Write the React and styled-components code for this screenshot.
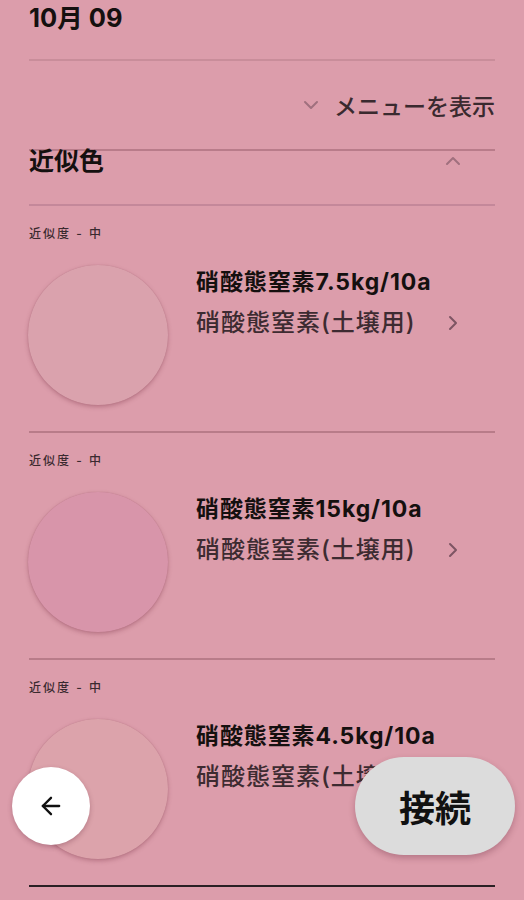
import React from "react";
import styled, { createGlobalStyle } from "styled-components";
import { ChevronDown, ChevronUp, ChevronRight, ArrowLeft } from "lucide-react";

const Global = createGlobalStyle`
  html, body { margin: 0; padding: 0; background: #dc9dab; }
  body { font-family: Inter, "Noto Sans CJK JP", "Noto Sans", sans-serif; }
  * { box-sizing: border-box; }
`;

const Page = styled.div`
  position: relative;
  width: 524px;
  height: 900px;
  overflow: hidden;
  background: #dc9dab;
  padding: 0 29px;
  color: #1c1316;
`;

const Header = styled.div`
  height: 61px;
  border-bottom: 2px solid #c98d9a;
`;

const DateText = styled.div`
  font-size: 25.5px;
  font-weight: 700;
  line-height: 35px;
  color: #15100f;
`;

const MenuRow = styled.div`
  height: 90px;
  display: flex;
  align-items: center;
  justify-content: flex-end;
  gap: 11px;
  border-bottom: 2px solid #b97c8a;
  color: #3a2a2f;
  font-size: 23px;
  font-weight: 500;
`;

const SectionHeader = styled.div`
  height: 55px;
  display: flex;
  justify-content: space-between;
  align-items: flex-start;
  border-bottom: 2px solid #c4889a;
`;

const SectionTitle = styled.div`
  font-size: 25px;
  font-weight: 700;
  line-height: 22px;
  margin-top: -1px;
  color: #15100f;
`;

const IconSlot = styled.div`
  display: flex;
  color: ${(p) => p.$color || "#9c6a78"};
  margin-right: ${(p) => p.$mr || 0}px;
  margin-top: ${(p) => p.$mt || 0}px;
`;

const Item = styled.div`
  padding: 20px 0 26px;
  border-bottom: 2px solid ${(p) => (p.$last ? "#2a2024" : "#b87c89")};
`;

const Label = styled.div`
  font-size: 12px;
  font-weight: 500;
  line-height: 16px;
  letter-spacing: 2px;
  color: #3a2a2f;
`;

const Row = styled.div`
  margin-top: 23px;
  display: flex;
  align-items: flex-start;
  gap: 28px;
`;

const Swatch = styled.div`
  width: 140px;
  height: 140px;
  border-radius: 50%;
  flex: none;
  margin-left: -1px;
  background: ${(p) => p.$color};
  box-shadow: 0 2px 4px rgba(120, 50, 70, 0.35), 0 0 1px rgba(120, 50, 70, 0.3);
`;

const Info = styled.div`
  flex: 1;
  margin-top: 3px;
  margin-right: 30px;
  display: flex;
  flex-direction: column;
  gap: 13px;
`;

const Title = styled.div`
  font-size: 23px;
  font-weight: 700;
  line-height: 28px;
  letter-spacing: 0.9px;
  color: #15100f;
  white-space: nowrap;
`;

const SubRow = styled.div`
  display: flex;
  align-items: center;
  justify-content: space-between;
`;

const Sub = styled.div`
  font-size: 24px;
  font-weight: 500;
  line-height: 28px;
  letter-spacing: 1px;
  color: #3d2b31;
  white-space: nowrap;
`;

const BackButton = styled.button`
  position: absolute;
  left: 12px;
  top: 767px;
  width: 78px;
  height: 78px;
  border-radius: 50%;
  border: none;
  background: #ffffff;
  display: flex;
  align-items: center;
  justify-content: center;
  color: #111;
  box-shadow: 0 2px 5px rgba(90, 30, 50, 0.3);
  padding: 0;
`;

const ConnectButton = styled.button`
  position: absolute;
  left: 355px;
  top: 757px;
  width: 160px;
  height: 98px;
  border-radius: 49px;
  border: none;
  background: #dcdcdc;
  font-family: "Noto Sans CJK JP", "Noto Sans", sans-serif;
  font-size: 36px;
  font-weight: 700;
  color: #111;
  box-shadow: 0 3px 6px rgba(90, 30, 50, 0.3);
  padding: 0;
`;

const items = [
  { title: "硝酸態窒素7.5kg/10a", color: "#daa2ad" },
  { title: "硝酸態窒素15kg/10a", color: "#d895aa" },
  { title: "硝酸態窒素4.5kg/10a", color: "#dca3ab" },
];

export default function App() {
  return (
    <>
      <Global />
      <Page>
        <Header>
          <DateText>10月 09</DateText>
        </Header>
        <MenuRow>
          <IconSlot $color="#a0707e">
            <ChevronDown size={24} strokeWidth={2} />
          </IconSlot>
          <span>メニューを表示</span>
        </MenuRow>
        <SectionHeader>
          <SectionTitle>近似色</SectionTitle>
          <IconSlot $color="#a0707e" $mr={30} $mt={-2}>
            <ChevronUp size={24} strokeWidth={2} />
          </IconSlot>
        </SectionHeader>
        {items.map((it, i) => (
          <Item key={i} $last={i === items.length - 1}>
            <Label>近似度 - 中</Label>
            <Row>
              <Swatch $color={it.color} />
              <Info>
                <Title>{it.title}</Title>
                <SubRow>
                  <Sub>硝酸態窒素(土壌用)</Sub>
                  <IconSlot $color="#7d5563">
                    <ChevronRight size={24} strokeWidth={2} />
                  </IconSlot>
                </SubRow>
              </Info>
            </Row>
          </Item>
        ))}
        <BackButton aria-label="戻る">
          <ArrowLeft size={28} strokeWidth={2} />
        </BackButton>
        <ConnectButton>接続</ConnectButton>
      </Page>
    </>
  );
}
